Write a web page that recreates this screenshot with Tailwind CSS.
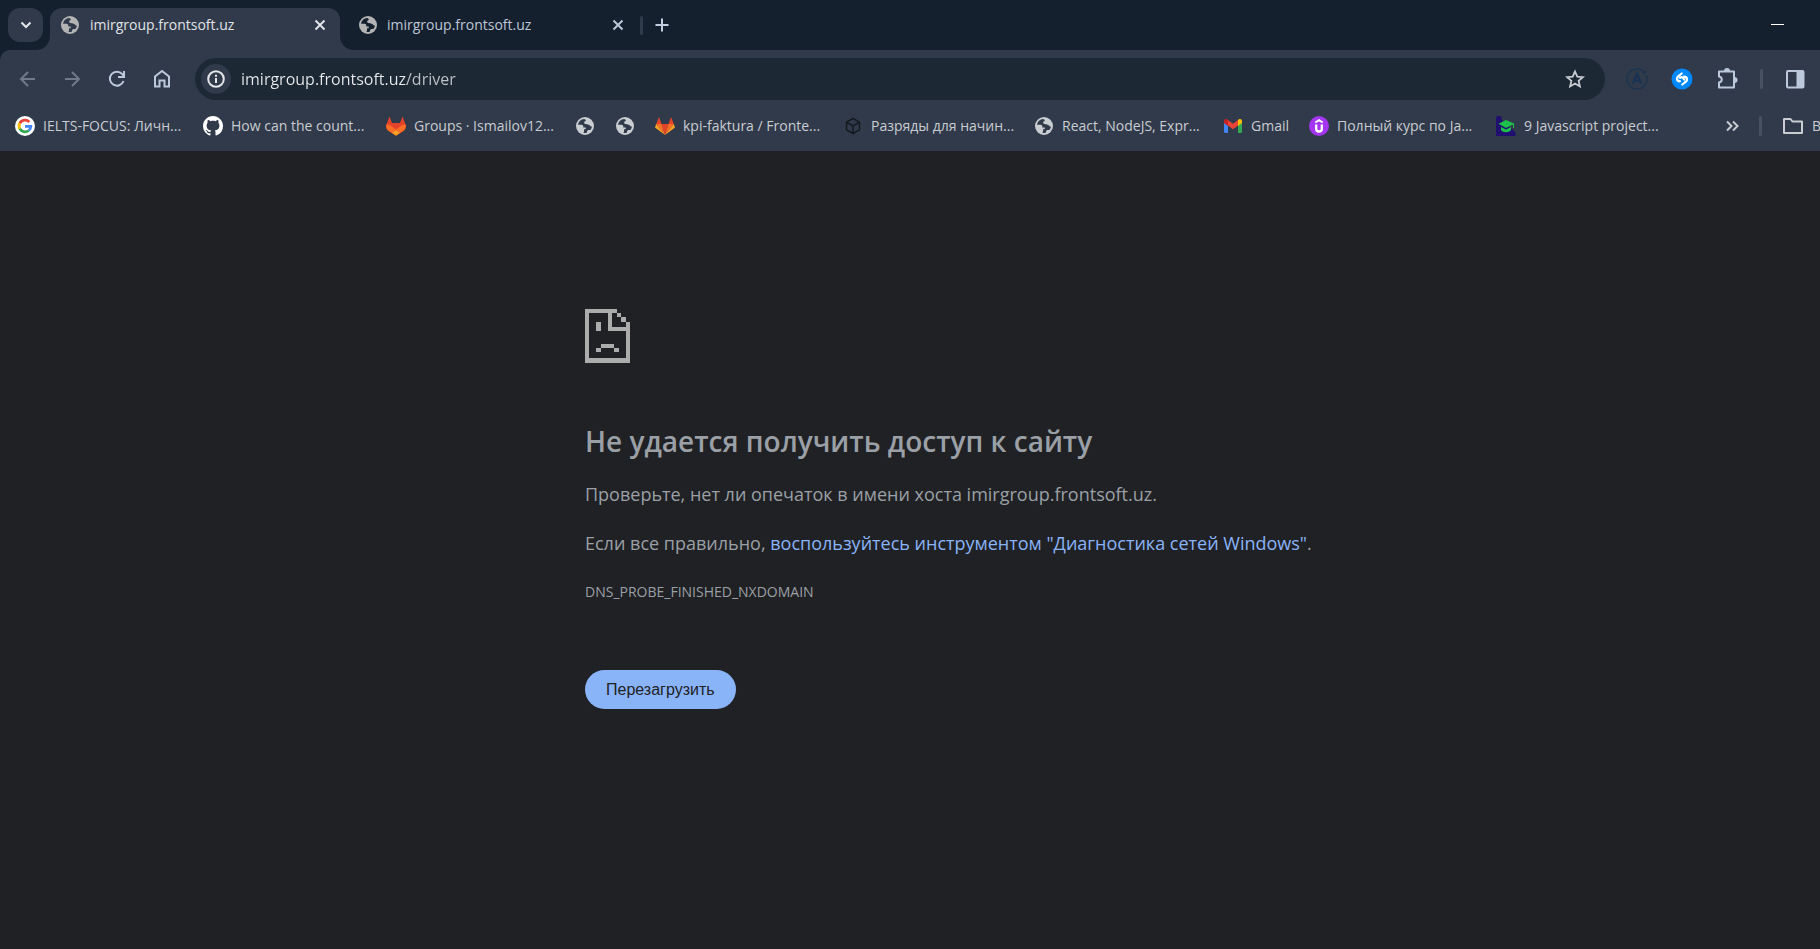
<!DOCTYPE html>
<html lang="ru">
<head>
<meta charset="utf-8">
<title>imirgroup.frontsoft.uz</title>
<script src="https://cdn.jsdelivr.net/npm/@tailwindcss/browser@4"></script>
</head>
<body class="flex min-h-screen flex-col overflow-x-hidden bg-[#202124] font-['Open_Sans','Noto_Sans',sans-serif]">
<svg class="hidden" aria-hidden="true">
  <symbol id="globe" viewBox="0 0 18 18">
    <circle cx="9" cy="9" r="9" fill="currentColor"/>
    <path fill="var(--cut)" d="M8.300 2C5 2.200 2.600 4.600 2.100 7.700h3.300c1.300 0 1.900.8 1.900 1.800v.9h2.400v1.800H8v2.500l-.6 1.100c1 .3 2.300.3 3.300 0 .5-1 .2-1.800.9-2.400.8-.7 2-.2 3-.6.8-1.100 1.200-2.200 1.300-3.400-.9.300-1.500-.3-2-.9-.8-1-1.700-1-2.800-1.300l-1.600-.1c-.9 0-1.300-.7-1.300-1.500 0-.9.600-1.300 1.400-1.300.3-1 .1-1.700-1.300-2.300z"/>
  </symbol>
</svg>

<header class="shrink-0 bg-[#303a4a]">
  <div class="flex h-[50px] bg-[#15202e] pt-2">
    <button aria-label="Поиск вкладок" class="ml-2 flex h-[34px] w-[35px] items-center justify-center rounded-xl bg-[#303a4a] text-[#e4e6ea]">
      <svg class="size-3" viewBox="0 0 12 12" fill="none" stroke="currentColor" stroke-width="2"><path d="M1.500 3.500L6 8l4.500-4.500"/></svg>
    </button>
    <div class="relative ml-[7px] flex h-[42px] w-[290px] items-center rounded-t-xl bg-[#303a4a] pb-2 pl-[11px] pr-3.5 text-[#e0e3e8]">
      <svg class="absolute -left-3.5 bottom-0 size-3.5 text-[#303a4a]" viewBox="0 0 14 14" fill="currentColor"><path d="M14 0v14H0A14 14 0 0 0 14 0z"/></svg>
      <svg class="absolute -right-3.5 bottom-0 size-3.5 text-[#303a4a]" viewBox="0 0 14 14" fill="currentColor"><path d="M0 0v14h14A14 14 0 0 1 0 0z"/></svg>
      <svg class="size-[18px] text-[#b4b4b4] [--cut:#303a4a]"><use href="#globe"/></svg>
      <span class="ml-[11px] flex-1 text-sm">imirgroup.frontsoft.uz</span>
      <button aria-label="Закрыть" class="flex size-3 items-center justify-center"><svg class="size-3" viewBox="0 0 12 12" fill="none" stroke="currentColor" stroke-width="2"><path d="M1.500 1.500l9 9M10.500 1.500l-9 9"/></svg></button>
    </div>
    <div class="flex h-[42px] w-[298px] items-center pb-2 pl-[19px] pr-3.5 text-[#bcc6d6]">
      <svg class="size-[18px] text-[#b4b4b4] [--cut:#15202e]"><use href="#globe"/></svg>
      <span class="ml-[10px] flex-1 text-sm">imirgroup.frontsoft.uz</span>
      <button aria-label="Закрыть" class="flex size-3 items-center justify-center"><svg class="size-3" viewBox="0 0 12 12" fill="none" stroke="currentColor" stroke-width="2"><path d="M1.500 1.500l9 9M10.500 1.500l-9 9"/></svg></button>
    </div>
    <span class="ml-0.5 mt-2 h-[19px] w-[3px] rounded bg-[#303a4a]"></span>
    <button aria-label="Новая вкладка" class="ml-[11px] mt-[9px] size-4 text-[#c3cee0]"><svg class="size-4" viewBox="0 0 16 16" fill="none" stroke="currentColor" stroke-width="2"><path d="M8 1.500v13M1.500 8h13"/></svg></button>
    <button aria-label="Свернуть" class="ml-auto mr-9 mt-2 flex h-4 w-[13px] items-center"><span class="h-px w-[13px] bg-white"></span></button>
  </div>

  <div class="relative flex h-[58px] items-center pl-[18px]">
    <svg class="absolute left-0 top-0 size-2.5 text-[#15202e]" viewBox="0 0 10 10" fill="currentColor"><path d="M0 0h10A10 10 0 0 0 0 10z"/></svg>
    <button aria-label="Назад" class="size-5 text-[#707987]"><svg class="size-5" viewBox="0 0 20 20" fill="none" stroke="currentColor" stroke-width="2"><path d="M17 10H4M10 3l-7 7 7 7"/></svg></button>
    <button aria-label="Вперёд" class="ml-6 size-5 text-[#707987]"><svg class="size-5" viewBox="0 0 20 20" fill="none" stroke="currentColor" stroke-width="2"><path d="M3 10h13M10 3l7 7-7 7"/></svg></button>
    <button aria-label="Обновить" class="ml-[25px] size-5 text-[#bcc8dc]"><svg class="size-5" viewBox="0 0 20 20" fill="none" stroke="currentColor" stroke-width="2"><path d="M16.500 12A7 7 0 1 1 15.300 5.200L16.500 6.500M17 2v6h-6"/></svg></button>
    <button aria-label="Главная" class="ml-[25px] size-5 text-[#bcc8dc]"><svg class="size-5" viewBox="0 0 20 20" fill="none" stroke="currentColor" stroke-width="2"><path d="M3 17.500V7.500L10 2l7 5.500v10h-4.500v-6h-5v6z"/></svg></button>
    <div class="ml-[23px] flex h-[42px] flex-1 items-center rounded-full bg-[#1c2935] pl-1.5 pr-5">
      <button aria-label="Сведения о сайте" class="flex size-[30px] items-center justify-center rounded-full bg-[#303a4a] text-[#e4e6ea]"><svg class="size-[18px]" viewBox="0 0 18 18" fill="none" stroke="currentColor" stroke-width="2"><circle cx="9" cy="9" r="7.800"/><path d="M9 8v5M9 4.800v2"/></svg></button>
      <input aria-label="Адрес" value="imirgroup.frontsoft.uz/driver" class="ml-2.5 flex-1 bg-[linear-gradient(90deg,#e8eaed_166px,#c0c4ca_166px)] bg-clip-text text-base text-transparent outline-none">
      <button aria-label="Добавить в закладки" class="size-5 text-[#c9cdd3]"><svg class="size-5" viewBox="0 0 20 20" fill="none" stroke="currentColor" stroke-width="1.800"><path d="M10 2.500l2.300 5.200 5.600.5-4.300 3.700 1.300 5.500-4.900-2.900-4.900 2.900 1.300-5.500L2.100 8.200l5.600-.5z"/></svg></button>
    </div>
    <button aria-label="Apollo" class="ml-[21px] size-[22px] text-[#1b3352]"><svg class="size-[22px]" viewBox="0 0 22 22" fill="none" stroke="currentColor" stroke-width="1.300"><path d="M20.300 7.500A10 10 0 1 1 17 3"/><circle cx="18.300" cy="4.200" r=".8" fill="currentColor"/><path stroke-width="2.300" d="M6.800 15.800L11 6l4.200 9.800M9 12.800h4"/></svg></button>
    <button aria-label="Shazam" class="ml-[23px] size-[22px]"><svg class="size-[22px]" viewBox="0 0 22 22"><circle cx="11" cy="11" r="10.500" fill="#08f"/><path fill="none" stroke="#fff" stroke-width="2.200" stroke-linecap="round" d="M9 13.300c-1.300 0-2.900-1-3-2.700 0-1 .4-1.700 1.100-2.300L10.700 5.500M13 8.700c1.300 0 2.900 1 3 2.700 0 1-.4 1.700-1.100 2.300l-3.600 2.800M9 9.900c1.400-1.200 2.400-.8 3.100.2l1.200 1.500"/></svg></button>
    <button aria-label="Расширения" class="ml-6 size-[22px] text-[#bcc8dc]"><svg class="size-[22px]" viewBox="0 0 22 22"><path fill="none" stroke="currentColor" stroke-width="2" stroke-linejoin="round" d="M2 3.500h15v16H2v-5c1.800-.3 2.800-1.500 2.800-3S3.800 8.800 2 8.500z"/><path fill="currentColor" d="M7 3a3 3 0 0 1 6 0zM17.500 9a3 3 0 0 1 0 6z"/></svg></button>
    <span class="ml-[21px] h-5 w-[3px] rounded bg-[#465162]"></span>
    <button aria-label="Боковая панель" class="ml-[22px] mr-[15px] size-5 text-[#bcc8dc]"><svg class="size-5" viewBox="0 0 20 20"><rect x="2" y="2" width="16.500" height="16.500" rx="1" fill="none" stroke="currentColor" stroke-width="2"/><path d="M11.500 2h7v16h-7z" fill="currentColor"/></svg></button>
  </div>

  <nav aria-label="Закладки" class="flex h-[43px] items-center gap-5 overflow-hidden whitespace-nowrap pb-[7px] pt-0 pl-[15px] text-sm text-[#c9ccd1]">
    <a href="#" class="flex shrink-0 items-center gap-2"><svg class="size-5" viewBox="0 0 20 20" fill="none" stroke-width="2.800"><circle cx="10" cy="10" r="10" fill="#fff"/><path stroke="#ea4335" d="M4.800 7.300A5.900 5.900 0 0 1 14.300 6"/><path stroke="#fbbc04" d="M4.900 12.900a5.900 5.900 0 0 1-.1-5.800"/><path stroke="#34a853" d="M13.700 14.500a5.900 5.900 0 0 1-8.900-1.700"/><path stroke="#4285f4" d="M10 10.300h5.800c0 1.700-.7 3.200-2 4.200"/></svg><span class="w-[140px]">IELTS-FOCUS: Личн...</span></a>
    <a href="#" class="flex shrink-0 items-center gap-2"><svg class="size-5" viewBox="0 0 16 16" fill="#fff"><path d="M8 0C3.580 0 0 3.580 0 8c0 3.540 2.290 6.530 5.470 7.590.4.070.55-.17.55-.38 0-.19-.01-.82-.01-1.490-2.010.37-2.530-.49-2.690-.94-.09-.23-.48-.94-.82-1.130-.28-.15-.68-.52-.01-.53.63-.01 1.080.58 1.230.82.72 1.210 1.870.87 2.330.66.07-.52.28-.87.510-1.070-1.780-.2-3.640-.89-3.640-3.950 0-.87.310-1.590.82-2.150-.08-.2-.36-1.020.08-2.120 0 0 .67-.21 2.200.82.640-.18 1.320-.27 2-.27s1.360.09 2 .27c1.530-1.040 2.200-.82 2.200-.82.440 1.100.16 1.920.08 2.120.510.56.820 1.270.820 2.150 0 3.070-1.870 3.750-3.650 3.950.29.25.540.73.540 1.480 0 1.070-.01 1.930-.01 2.200 0 .21.150.46.550.38A8.010 8.010 0 0 0 16 8c0-4.420-3.580-8-8-8z"/></svg><span class="w-[135px]">How can the count...</span></a>
    <a href="#" class="flex shrink-0 items-center gap-2"><svg class="size-5" viewBox="0 0 20 20"><path fill="#e24329" d="M3.500.5L.7 8C-.3 11 .5 13.500 3 15.200l7 4.300 7-4.300c2.500-1.700 3.300-4.200 2.300-7.200L16.500.5 14 7H6z"/><path fill="#fc6d26" d="M.7 8C-.3 11 .5 13.500 3 15.200l3.500 2.100L10 14.800l3.500 2.500L17 15.200c2.500-1.700 3.300-4.200 2.300-7.200-1.700.3-3.200 1-4.500 2L10 13.500 5.200 10C3.900 9 2.400 8.300.7 8z"/><path fill="#fca326" d="M10 14.300l-3.900 2.800L10 19.700l3.900-2.600z"/></svg><span class="w-[141px]">Groups · Ismailov12...</span></a>
    <a href="#" aria-label="Закладка" class="flex w-5 shrink-0 justify-center"><svg class="size-[18px] text-[#c9ccd1] [--cut:#303a4a]"><use href="#globe"/></svg></a>
    <a href="#" aria-label="Закладка" class="flex w-5 shrink-0 justify-center"><svg class="size-[18px] text-[#c9ccd1] [--cut:#303a4a]"><use href="#globe"/></svg></a>
    <a href="#" class="flex shrink-0 items-center gap-2"><svg class="size-5" viewBox="0 0 20 20"><path fill="#e24329" d="M4 1L1.200 8h17.600L16 1l-2.500 7h-7zM6.500 8h7L10 19z"/><path fill="#fc6d26" d="M1.200 8h5.300L10 19zM18.800 8h-5.300L10 19z"/><path fill="#fca326" d="M1.200 8L0 11.500 10 19zM18.800 8l1.200 3.500L10 19z"/></svg><span class="w-[140px]">kpi-faktura / Fronte...</span></a>
    <a href="#" class="flex shrink-0 items-center gap-2"><svg class="size-5 text-[#141a20]" viewBox="0 0 20 20" fill="none" stroke="currentColor" stroke-width="1.500" stroke-linejoin="round"><path d="M10 2.500l6.500 3.700v7.600L10 17.500l-6.500-3.700V6.200zM3.500 6.200L10 10l6.500-3.800M10 10v7.500"/></svg><span class="w-[143px]">Разряды для начин...</span></a>
    <a href="#" class="flex shrink-0 items-center gap-2"><span class="flex w-5 justify-center"><svg class="size-[18px] text-[#c9ccd1] [--cut:#303a4a]"><use href="#globe"/></svg></span><span class="w-[141px]">React, NodeJS, Expr...</span></a>
    <a href="#" class="flex shrink-0 items-center gap-2"><svg class="size-5" viewBox="0 0 20 20"><path fill="#4285f4" d="M1 6l4 3v8H2.500A1.500 1.500 0 0 1 1 15.500z"/><path fill="#34a853" d="M19 6l-4 3v8h2.500a1.500 1.500 0 0 0 1.500-1.500z"/><path fill="#c5221f" d="M1 7V5c0-2 2-2.600 3.300-1.600L5 4v6z"/><path fill="#fbbc04" d="M19 7V5c0-2-2-2.600-3.300-1.600L15 4v6z"/><path fill="#ea4335" d="M5 4l5 3.800L15 4v5.500l-5 3.800-5-3.800z"/></svg><span class="w-[38px]">Gmail</span></a>
    <a href="#" class="flex shrink-0 items-center gap-2"><svg class="size-5" viewBox="0 0 20 20" fill="none" stroke="#fff"><circle cx="10" cy="10" r="10" fill="#a435f0" stroke="none"/><path stroke-width="2" d="M6.300 6.500L10 4.200l3.700 2.300"/><path stroke-width="2.300" d="M7.200 8.500v4.200a2.800 2.800 0 0 0 5.600 0V8.500"/></svg><span class="w-[139px]">Полный курс по Ja...</span></a>
    <a href="#" class="flex shrink-0 items-center gap-2"><svg class="size-5" viewBox="0 0 20 20"><path fill="#210f70" d="M0 1.500L1.500 0H5l1 4 10 9 3.500 3.500V20H0z"/><path fill="#1fbf4c" d="M10 4l8 3.500V12h-1V8.500L10 12 2.500 7.700zM5 11l5 2.500 5-2.500v3c-2 3-8 3-10 0z"/></svg><span class="w-[137px]">9 Javascript project...</span></a>
    <div class="ml-auto flex shrink-0 items-center">
      <button aria-label="Другие закладки" class="size-[14px] text-[#c9ccd1]"><svg class="size-[14px]" viewBox="0 0 14 14" fill="none" stroke="currentColor" stroke-width="2"><path d="M2 2.500L6.500 7 2 11.500M8 2.500L12.500 7 8 11.500"/></svg></button>
      <span class="ml-5 h-5 w-[3px] rounded bg-[#465162]"></span>
      <a href="#" class="ml-5 flex w-[38px] items-center gap-2 overflow-hidden"><svg class="size-[22px] shrink-0" viewBox="0 0 22 22" fill="none" stroke="currentColor" stroke-width="2" stroke-linejoin="round"><path d="M2 4h6.500l2 2.500H20V18H2z"/></svg><span>Все закладки</span></a>
    </div>
  </nav>
</header>

<!-- The window runs 100px past the right edge, so the column is centred on the wider area. -->
<main class="flex-1 pl-[100px] text-[#9aa0a6]">
  <div class="mx-auto max-w-[750px] pt-[157px]">
    <svg class="h-[55px] w-[46px] text-[#acacac]" viewBox="0 0 46 55" fill="currentColor" shape-rendering="crispEdges"><path d="M0 1h32v4H4v45h37V23H23V5h4v14h14v-5h4v41H0zM32 5h4v4h-4zM36 9h5v5h-5zM11 14h5v9h-5zM16 36h13v4H16zM11 40h5v4h-5zM29 40h5v4h-5z"/></svg>
    <h1 class="mt-[60px] text-[28px] font-semibold leading-9">Не удается получить доступ к сайту</h1>
    <p class="mt-[21px] whitespace-nowrap text-lg leading-7">Проверьте, нет ли опечаток в имени хоста imirgroup.frontsoft.uz.</p>
    <p class="mt-[21px] whitespace-nowrap text-lg leading-7">Если все правильно, <a href="#" class="text-[#8ab4f8]">воспользуйтесь инструментом "Диагностика сетей Windows"</a>.</p>
    <p class="mt-[21px] text-sm leading-7">DNS_PROBE_FINISHED_NXDOMAIN</p>
    <button class="mt-16 h-[39px] rounded-full bg-[#8ab4f8] px-[21px] font-['Liberation_Sans',Arial,sans-serif] text-base text-[#202124]">Перезагрузить</button>
  </div>
</main>
</body>
</html>
